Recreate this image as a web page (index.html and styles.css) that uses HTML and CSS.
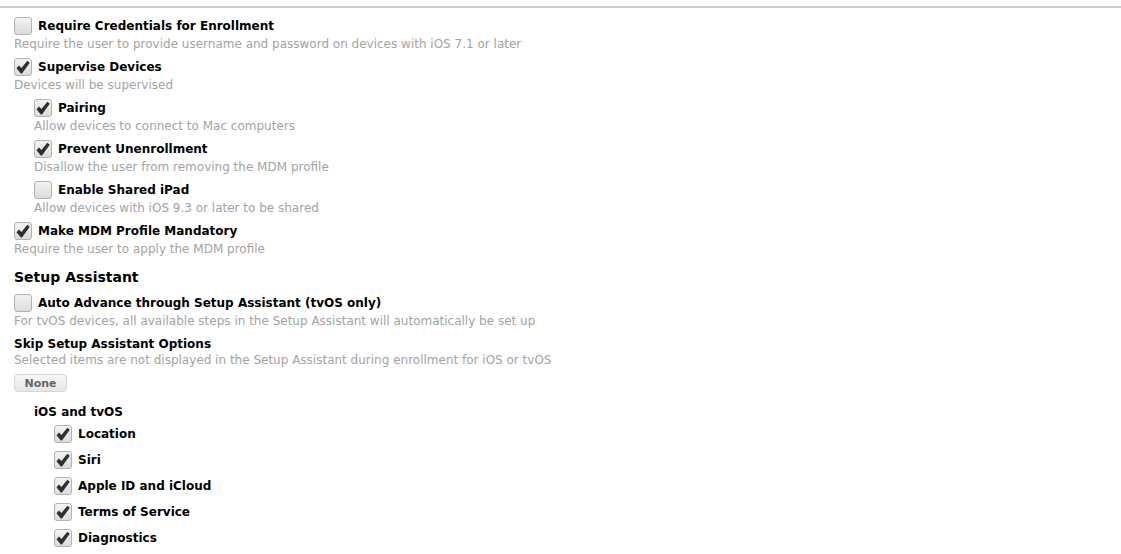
FILE: index.html
```html
<!DOCTYPE html>
<html lang="en">
<head>
    <meta charset="UTF-8">
    <title>Enrollment Settings</title>
    <link rel="stylesheet" href="styles.css">
</head>
<body>
    <div class="topline"></div>
    <div class="settings">
        <div class="option">
            <label class="option-head"><span class="box"></span>Require Credentials for Enrollment</label>
            <div class="desc">Require the user to provide username and password on devices with iOS 7.1 or later</div>
        </div>
        <div class="option">
            <label class="option-head"><span class="box checked"></span>Supervise Devices</label>
            <div class="desc">Devices will be supervised</div>
        </div>
        <div class="sub">
            <div class="option">
                <label class="option-head"><span class="box checked"></span>Pairing</label>
                <div class="desc">Allow devices to connect to Mac computers</div>
            </div>
            <div class="option">
                <label class="option-head"><span class="box checked"></span>Prevent Unenrollment</label>
                <div class="desc">Disallow the user from removing the MDM profile</div>
            </div>
            <div class="option">
                <label class="option-head"><span class="box"></span>Enable Shared iPad</label>
                <div class="desc">Allow devices with iOS 9.3 or later to be shared</div>
            </div>
        </div>
        <div class="option">
            <label class="option-head"><span class="box checked"></span>Make MDM Profile Mandatory</label>
            <div class="desc">Require the user to apply the MDM profile</div>
        </div>

        <h3 class="section">Setup Assistant</h3>
        <div class="option">
            <label class="option-head"><span class="box"></span>Auto Advance through Setup Assistant (tvOS only)</label>
            <div class="desc">For tvOS devices, all available steps in the Setup Assistant will automatically be set up</div>
        </div>
        <div class="option">
            <div class="title">Skip Setup Assistant Options</div>
            <div class="desc">Selected items are not displayed in the Setup Assistant during enrollment for iOS or tvOS</div>
        </div>
        <button class="btn">None</button>

        <div class="group">
            <div class="group-title">iOS and tvOS</div>
            <ul class="checklist">
                <li><span class="box checked"></span>Location</li>
                <li><span class="box checked"></span>Siri</li>
                <li><span class="box checked"></span>Apple ID and iCloud</li>
                <li><span class="box checked"></span>Terms of Service</li>
                <li><span class="box checked"></span>Diagnostics</li>
            </ul>
        </div>
    </div>
</body>
</html>
```

FILE: styles.css
```css
body {
    margin: 0;
    padding: 0;
    font-family: 'DejaVu Sans', Verdana, sans-serif;
    background-color: #fff;
    color: #000;
}
.topline {
    margin-top: 6px;
    border-top: 2px solid #cdcdcd;
}
.settings {
    padding: 8px 14px 0 14px;
}
.option {
    margin-bottom: 5px;
}
.option-head {
    display: flex;
    align-items: center;
    gap: 6px;
    height: 20px;
    font-size: 12px;
    font-weight: bold;
}
.title {
    padding-top: 2px;
    font-size: 12px;
    font-weight: bold;
    line-height: 16px;
}
.desc {
    font-size: 12px;
    line-height: 16px;
    color: #a3a3a3;
}
.sub {
    padding-left: 20px;
}
.box {
    flex: none;
    width: 16px;
    height: 16px;
    border: 1px solid #b2b2b2;
    border-radius: 3px;
    background: linear-gradient(#f3f3f3, #dcdcdc);
    display: inline-block;
    box-sizing: content-box;
    position: relative;
}
.box.checked::after {
    content: "";
    position: absolute;
    left: 0;
    top: 0;
    width: 16px;
    height: 16px;
    background: url("data:image/svg+xml;utf8,<svg xmlns='http://www.w3.org/2000/svg' viewBox='0 0 16 16'><path d='M1.5 9.2 L4 6.6 L6.4 9 L12.4 1.8 L14.8 3.8 L7 14.5 L5.8 14.5 Z' fill='%232e2e2e'/></svg>") no-repeat;
}
.section {
    margin: 11px 0 7px 0;
    font-size: 14px;
    font-weight: bold;
    line-height: 18px;
}
.btn {
    display: block;
    margin: 6px 0 12px 0;
    width: 53px;
    height: 18px;
    padding: 0;
    border: 1px solid #d6d6d6;
    border-radius: 4px;
    background: linear-gradient(#f7f7f7, #e6e6e6);
    font-family: 'DejaVu Sans', Verdana, sans-serif;
    font-size: 11px;
    font-weight: bold;
    color: #666;
}
.group {
    padding-left: 20px;
}
.group-title {
    font-size: 12px;
    font-weight: bold;
    line-height: 16px;
    margin-bottom: 4px;
}
.checklist {
    list-style: none;
    margin: 0;
    padding: 0 0 0 20px;
}
.checklist li {
    display: flex;
    align-items: center;
    gap: 6px;
    height: 20px;
    margin-bottom: 6px;
    font-size: 12px;
    font-weight: bold;
}
```
